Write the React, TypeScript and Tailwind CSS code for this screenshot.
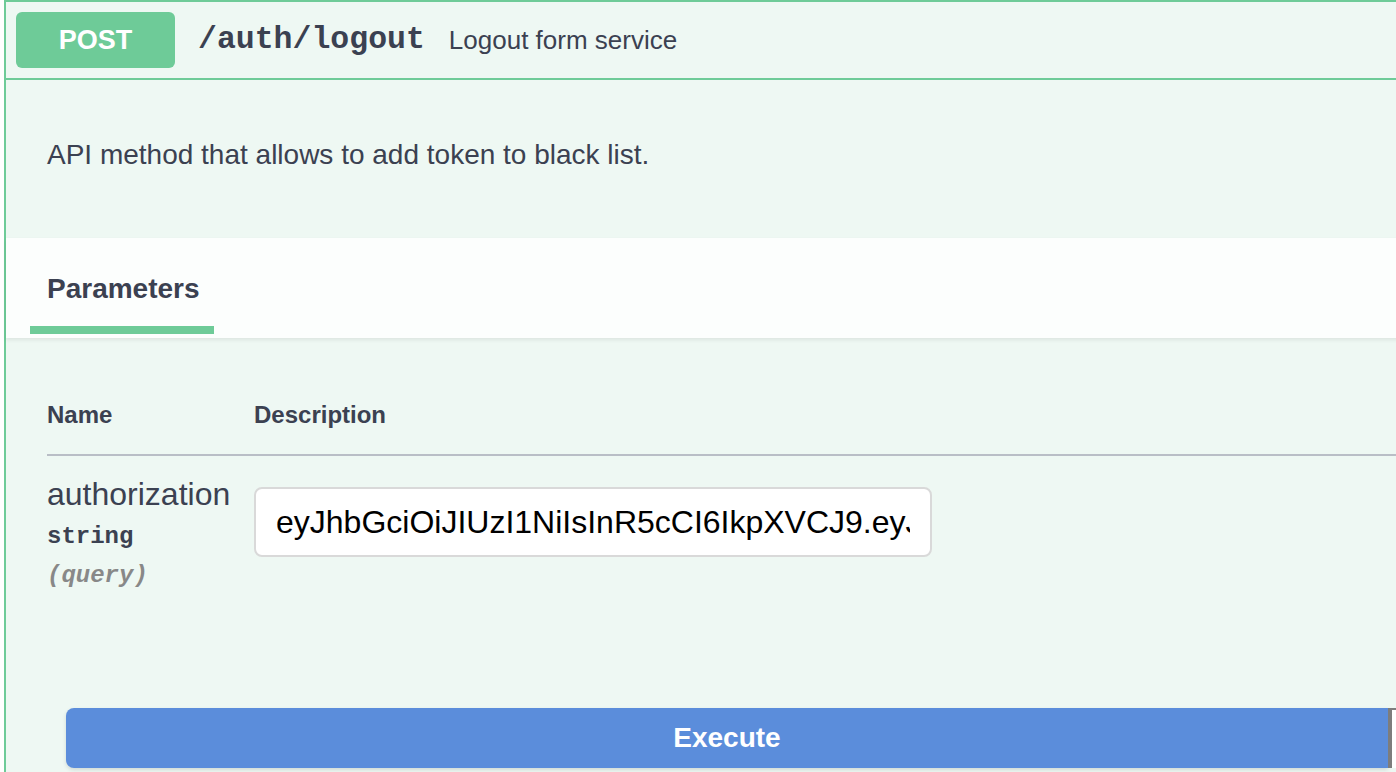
import React from 'react'

const sans = { fontFamily: '"Liberation Sans", Arial, Helvetica, sans-serif' }

export default function App() {
	return (
		<div
			className="w-[1396px] h-[772px] overflow-hidden bg-white text-[#3b4151] font-['Liberation_Sans',Arial,sans-serif]"
		>
			{/* opblock */}
			<div className="ml-[4px] w-[1420px] h-[800px] border-t-2 border-l-2 border-[#6ecb98] bg-[#eef8f3]">
				{/* summary */}
				<div className="flex items-center h-[78px] border-b-2 border-[#6ecb98] px-[10px]">
					<div className="flex items-center justify-center w-[159px] h-[56px] rounded-[6px] bg-[#6ecb98] text-white text-[27px] font-bold">
						POST
					</div>
					<span className="ml-[23px] font-['Liberation_Mono',monospace] font-bold text-[31.5px] text-[#3b4151]">
						/auth/logout
					</span>
					<span className="ml-[24px] text-[26px] text-[#3b4151]">Logout form service</span>
				</div>

				{/* description */}
				<div className="h-[158px] flex items-center pb-2 px-[41px]">
					<p className="text-[28px] leading-[40px]">API method that allows to add token to black list.</p>
				</div>

				{/* parameters tab header */}
				<div className="h-[100px] bg-white/85 shadow-[0_2px_4px_rgba(0,0,0,0.08)] pl-[24px]">
					<div className="inline-flex flex-col pt-[31px] w-[184px]">
						<span className="pl-[17px] text-[28px] leading-[40px] font-bold whitespace-nowrap">Parameters</span>
						<div className="mt-[17px] h-[8px] bg-[#6ecb98]" />
					</div>
				</div>

				{/* table */}
				<div className="pl-[41px]">
					<div className="flex pt-[62px] pb-[24px] border-b-2 border-[#b9bec6] text-[24px] leading-[30px] font-bold">
						<div className="w-[207px]">Name</div>
						<div>Description</div>
					</div>
					<div className="flex">
						<div className="w-[207px] flex flex-col">
							<span className="mt-[18px] text-[32px] leading-[40px]">authorization</span>
							<span className="mt-[8px] font-['Liberation_Mono',monospace] font-bold text-[24px] leading-[30px]">
								string
							</span>
							<span className="mt-[9px] font-['Liberation_Mono',monospace] font-bold italic text-[24px] leading-[30px] text-[#888888]">
								(query)
							</span>
						</div>
						<div className="pt-[31px]">
							<input
								readOnly
								value="eyJhbGciOiJIUzI1NiIsInR5cCI6IkpXVCJ9.eyJzdWIiOiIxMjM0NTY3ODkwIn0"
								style={sans}
								className="w-[678px] h-[70px] px-[20px] rounded-[8px] border-2 border-[#d9d9d9] bg-white text-[32px] text-black outline-none"
							/>
						</div>
					</div>
				</div>

				{/* execute */}
				<div className="flex mt-[117px] pl-[60px]">
					<button className="w-[1322px] h-[60px] shrink-0 rounded-l-[8px] bg-[#5b8ddb] text-white text-[28px] font-bold shadow-[0_2px_4px_rgba(0,0,0,0.12)]">
						Execute
					</button>
					<div className="w-[60px] h-[60px] shrink-0 border-l-4 border-t-2 border-[#7d7d7d] bg-white" />
				</div>
			</div>
		</div>
	)
}
